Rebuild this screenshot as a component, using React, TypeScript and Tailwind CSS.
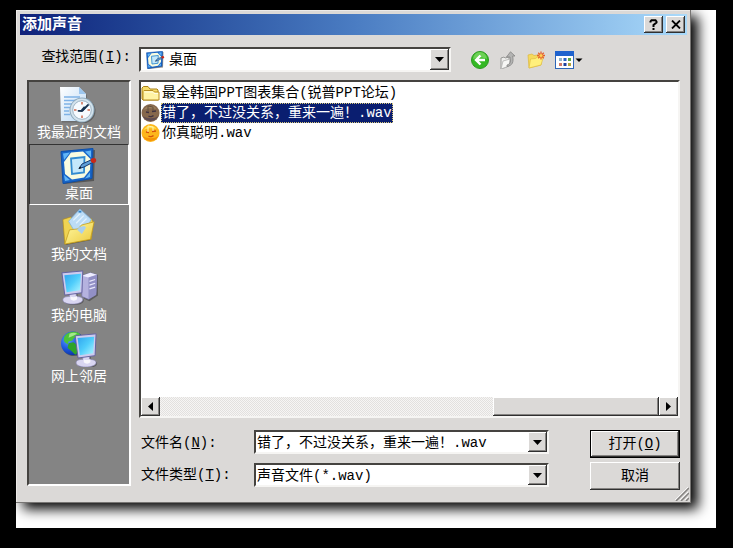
import { useState } from 'react';
import type { ReactNode } from 'react';
import clsx from 'clsx';

const raised =
  'bg-[#dbd9d7] shadow-[inset_-1px_-1px_#303030,inset_1px_1px_#ffffff,inset_-2px_-2px_#858381]';
const sunken =
  'bg-white border-2 border-t-[#454340] border-l-[#454340] border-r-[#f6f5f3] border-b-[#f6f5f3]';

function RecentIcon() {
  return (
    <svg viewBox="0 0 38 36" className="h-9 w-[38px] shrink-0" aria-hidden="true">
      <defs>
        <linearGradient id="page" x1="0" y1="0" x2="1" y2="1">
          <stop offset="0" stopColor="#ffffff" />
          <stop offset="1" stopColor="#b9d8f5" />
        </linearGradient>
      </defs>
      <path d="M1 34.500V1h19l6 6v27.500z" fill="#555" opacity=".5" transform="translate(1 1)" />
      <path d="M0 0h19l7 7v27H1z" fill="url(#page)" />
      <path d="M19 0v7h7z" fill="#9cc6ee" />
      <path d="M4 10h16M4 13.500h16M4 17h10M4 20.500h6M4 24h5M4 27.500h6" stroke="#7fb2e6" strokeWidth="1.300" />
      <circle cx="23.500" cy="24" r="12" fill="#444" opacity=".55" />
      <circle cx="22" cy="23" r="12.500" fill="#8faabd" />
      <circle cx="22" cy="23" r="11.500" fill="#d3e3ed" />
      <circle cx="22" cy="23" r="9.300" fill="#f6fbff" stroke="#8ba5b8" strokeWidth=".8" />
      <path d="M22 15v2.500M22 28.500V31M14 23h2.500M27.500 23H30" stroke="#cf6a4d" strokeWidth="1.500" />
      <path d="M28 18l-6 6-3.500-.2" fill="none" stroke="#16324f" strokeWidth="1.800" strokeLinecap="round" />
      <path d="M25 20l-3 3.500" stroke="#16324f" strokeWidth="2.600" />
    </svg>
  );
}

function DesktopIcon({ className }: { className: string }) {
  return (
    <svg viewBox="0 0 38 36" className={className} aria-hidden="true">
      <path d="M3 5l32-3-1 31-30 3z" fill="#333" opacity=".55" />
      <path d="M1 3.500L33 .5l-1 30L3 35.500z" fill="#1765c8" stroke="#0e4fa8" />
      <path d="M3 5.500l7-1L4 12zM31 2.500l-6 1 6 6zM30 29l-5 1.500 5-6zM5 33l5-1-6-5z" fill="#62b6f7" />
      <path d="M11 4.500l12-1 7.500 7.500-.5 11-6 7.500-12 2L5 26l-1-12z" fill="#f8fbe0" />
      <path d="M11 10.500l13.500-1.500-.5 15.500-12 1.500z" fill="#c4e8fb" stroke="#328bd0" strokeWidth="1.800" />
      <path d="M19 20.500l3-4.500 10-4.500 1.500 2.500-9.500 5z" fill="#5e9fd8" stroke="#183b70" strokeWidth="1" />
      <path d="M18.500 21l3-1-1.500-1.500z" fill="#111" />
      <ellipse cx="33.500" cy="12.500" rx="2.700" ry="2.400" fill="#c92818" />
    </svg>
  );
}

function DocumentsIcon() {
  return (
    <svg viewBox="0 0 38 38" className="h-9 w-[38px] shrink-0" aria-hidden="true">
      <defs>
        <linearGradient id="docFolder" x1="0" y1="0" x2="1" y2="1">
          <stop offset="0" stopColor="#fffaa6" />
          <stop offset="1" stopColor="#ecc93c" />
        </linearGradient>
      </defs>
      <path d="M5 38l-1-16 31-8-4 19z" fill="#333" opacity=".5" />
      <path d="M2 11l8-2.500 3 2.500 19-1 2 4-2 18L4 37z" fill="#efd352" stroke="#b18b17" strokeWidth=".7" />
      <path d="M8 13L20 0l12 11-9 16-9-4z" fill="#bcdcf6" stroke="#7fb2de" strokeWidth=".8" />
      <path d="M13 12l7-7M16 15l8-8M20 17l7-7" stroke="#e3f2fe" strokeWidth="1.300" />
      <path d="M18.500 1.800h3v2h-3z" fill="#3384c8" />
      <path d="M4 37l5-15 9-1 3.500-4L35 13.500 31 32z" fill="url(#docFolder)" stroke="#c39c1c" strokeWidth=".8" />
      <path d="M17 22l5 4.500 4.500-7-2-1.500-5 1z" fill="#a9cfee" />
    </svg>
  );
}

function Screen() {
  return (
    <g>
      <path d="M10 24l7-1 1 6 6 2c1 4-4 6-10 6-7 0-11-2-10-5 1-2 3-3 6-3z" fill="#333" opacity=".5" />
      <path d="M9 23l7-1v6c4 0 7 1 7 3.500S18 36 12 36s-10-1.800-10-4.500S5 28 9 28z" fill="#d9d6f1" stroke="#8f8cba" strokeWidth=".7" />
      <path d="M10 28c3 1 5 1 7-1v4c-2 2-5 2-7 0z" fill="#fff" opacity=".8" />
      <path d="M1 3l22-2-1 23-18 2.500z" fill="#cccbee" stroke="#6260a0" strokeWidth="1" />
      <path d="M3.500 5.500L21 4l-1 17.500L6 23.500z" fill="url(#glass)" />
    </g>
  );
}

function GlassGradient() {
  return (
    <defs>
      <linearGradient id="glass" x1="0" y1="0" x2="1" y2="1">
        <stop offset="0" stopColor="#2fa4ee" />
        <stop offset=".5" stopColor="#4fcdfb" />
        <stop offset="1" stopColor="#b0f6ff" />
      </linearGradient>
    </defs>
  );
}

function ComputerIcon() {
  return (
    <svg viewBox="0 0 38 38" className="h-9 w-[38px] shrink-0" aria-hidden="true">
      <GlassGradient />
      <path d="M24 7l15-2v22l-9 6-6-3z" fill="#333" opacity=".5" />
      <path d="M22 6l9-3 7 2-1 21-8 5-7-3z" fill="#b5b2df" stroke="#6f6da5" strokeWidth=".7" />
      <path d="M22 6l9-3 7 2-9 3z" fill="#eeedff" />
      <path d="M29 8l9-3-1 21-8 5z" fill="#9290c6" />
      <path d="M30 12l6-2M30 16l6-2M30 20l6-2" stroke="#e8e7fb" strokeWidth="1.300" />
      <Screen />
    </svg>
  );
}

function NetworkIcon() {
  return (
    <svg viewBox="0 0 38 38" className="h-9 w-[38px] shrink-0" aria-hidden="true">
      <defs>
        <radialGradient id="globe" cx=".3" cy=".35" r=".8">
          <stop offset="0" stopColor="#5b9dff" />
          <stop offset=".5" stopColor="#1b55dc" />
          <stop offset="1" stopColor="#08268c" />
        </radialGradient>
      </defs>
      <GlassGradient />
      <circle cx="13.500" cy="14" r="12.500" fill="#333" opacity=".5" />
      <circle cx="12.500" cy="13" r="12.500" fill="url(#globe)" />
      <path d="M5 4C8 .8 14-.5 19 2l2 3-4 3-3-1-2 3-4 1-1 3-3-2C2 9 3 6 5 4z" fill="#4cc23a" />
      <path d="M8 13l5-1 6 4v6l-4 3-4-4-4-3z" fill="#2ea32a" />
      <path d="M9 3c3-1.500 6-1.500 8 0l-4 2-5 2z" fill="#a3e88a" />
      <g transform="translate(14 2)">
        <Screen />
      </g>
    </svg>
  );
}

function FolderIcon() {
  return (
    <svg viewBox="0 0 20 20" className="h-5 w-5 shrink-0" aria-hidden="true">
      <path d="M1 16V5l1.500-1.500H7L9 6h7l1 1v10H2z" fill="#f6dc6a" stroke="#a98118" />
      <path d="M2 17V8.500L3 7.500h9L13.500 9H18v8z" fill="#fff3a4" stroke="#b88d20" />
      <path d="M3.500 9h8L13 10.500h4" stroke="#fffde2" fill="none" />
    </svg>
  );
}

function SoundIcon({ selected }: { selected: boolean }) {
  return (
    <svg viewBox="0 0 20 20" className="h-5 w-5 shrink-0" aria-hidden="true">
      <circle cx="9.500" cy="10" r="9" fill={selected ? '#86674c' : '#fdb61c'} />
      <path d="M1.500 13a9 9 0 0 0 16 0c-4 3-11 3-16 0z" fill={selected ? '#5f4c52' : '#f49308'} />
      <path d="M2.500 7c3-5 10-6 13-1-4-1-9-1-13 1z" fill={selected ? '#9c805c' : '#ffe052'} />
      <path
        d="M5 9l3 .5M11 8.500l4-.5M7.500 13c1.500 1 4 .5 5-.5"
        stroke={selected ? '#3f3140' : '#d5520c'}
        strokeWidth="1.500"
        fill="none"
      />
      <path d="M7 3v6M7 3l5 1v4" stroke={selected ? '#63503f' : '#fff3ae'} fill="none" />
    </svg>
  );
}

const places = [
  { id: 'recent', label: '我最近的文档', icon: <RecentIcon /> },
  { id: 'desktop', label: '桌面', icon: <DesktopIcon className="h-9 w-[38px] shrink-0" /> },
  { id: 'documents', label: '我的文档', icon: <DocumentsIcon /> },
  { id: 'computer', label: '我的电脑', icon: <ComputerIcon /> },
  { id: 'network', label: '网上邻居', icon: <NetworkIcon /> },
];

const files = [
  { name: '最全韩国PPT图表集合(锐普PPT论坛)', folder: true },
  { name: '错了，不过没关系，重来一遍！.wav', folder: false },
  { name: '你真聪明.wav', folder: false },
];

const toolButtons = [
  {
    label: '后退',
    icon: (
      <svg viewBox="0 0 18 18" className="h-[18px] w-[18px]" aria-hidden="true">
        <circle cx="9" cy="9" r="8.500" fill="#35b824" stroke="#2b9a20" />
        <path d="M2 8a7 7 0 0 1 14 0c-4-2-9-2-14 0z" fill="#86dc6b" opacity=".7" />
        <path d="M9.500 4.500L5 9l4.500 4.500M5.500 9H14" stroke="#fff" strokeWidth="2.400" fill="none" />
      </svg>
    ),
  },
  {
    label: '向上一级',
    icon: (
      <svg viewBox="0 0 18 18" className="h-[18px] w-[18px]" aria-hidden="true">
        <path d="M2 7l3-1 1 1 4-1v9l-8 3z" fill="#ececea" stroke="#9a9a98" />
        <path d="M4 10l7-2-1 7-8 3z" fill="#f7f7f5" stroke="#b0b0ae" strokeWidth=".8" />
        <path d="M8 14c4-1 4-4 3-8H7.500L11.500.8 16 5h-2.300c1 6 0 9.500-5.700 10.500z" fill="#b4b4b3" stroke="#858584" strokeWidth=".8" />
      </svg>
    ),
  },
  {
    label: '新建文件夹',
    icon: (
      <svg viewBox="0 0 18 18" className="h-[18px] w-[18px]" aria-hidden="true">
        <path d="M1 4l4-1 2 1.500 7-1V14L2 17z" fill="#f6da5c" stroke="#dbb840" strokeWidth=".7" />
        <path d="M2 17L3.500 8l5-.5 2-1.500 6-.5L14 14z" fill="#fff07c" stroke="#dfbd43" strokeWidth=".7" />
        <path d="M14 .5v8M10 4.500h8M11.200 1.700l5.600 5.600M16.800 1.700l-5.600 5.600" stroke="#e5602c" strokeWidth="1.300" />
        <circle cx="14" cy="4.500" r="1.600" fill="#ffd257" />
      </svg>
    ),
  },
  {
    label: '查看',
    icon: (
      <svg viewBox="0 0 28 18" className="h-[18px] w-7" aria-hidden="true">
        <rect x=".5" y=".5" width="18" height="17" fill="#fff" stroke="#2d66b8" />
        <path d="M0 0h19v5H0z" fill="#1e62cd" />
        <path d="M4 7h3v3H4z" fill="#8fb4c9" />
        <path d="M8.500 7h3v3h-3z" fill="#2b63c4" />
        <path d="M13 7h3v3h-3z" fill="#58a548" />
        <path d="M4 12h3v3H4z" fill="#cf7a69" />
        <path d="M8.500 12h3v3h-3z" fill="#1f3f9c" />
        <path d="M13 12h3v3h-3z" fill="#b2a13e" />
        <path d="M20.500 7.500h7L24 11z" fill="#000" />
      </svg>
    ),
  },
];

function DropArrow() {
  return (
    <svg viewBox="0 0 9 5" className="h-[5px] w-[9px]" aria-hidden="true">
      <path d="M0 0h9L4.500 5z" fill="#000" />
    </svg>
  );
}

function ComboBox({ children, className }: { children: ReactNode; className?: string }) {
  return (
    <div className={clsx('flex min-w-0 flex-1', sunken, className)}>
      {children}
      <span className={clsx('pointer-events-none flex w-[19px] shrink-0 items-center justify-center', raised)}>
        <DropArrow />
      </span>
    </div>
  );
}

function ScrollBar() {
  return (
    <div className="flex h-[19px] bg-[repeating-conic-gradient(#f6f5f4_0_25%,#e2e0de_0_50%)] bg-[length:2px_2px]">
      <button aria-label="向左滚动" className={clsx('flex w-[19px] items-center justify-center', raised)}>
        <svg viewBox="0 0 5 9" className="h-[9px] w-[5px]" aria-hidden="true">
          <path d="M5 0v9L0 4.500z" />
        </svg>
      </button>
      <div className="flex flex-1 justify-end">
        <div className={clsx('w-1/3', raised)} />
      </div>
      <button aria-label="向右滚动" className={clsx('flex w-[19px] items-center justify-center', raised)}>
        <svg viewBox="0 0 5 9" className="h-[9px] w-[5px]" aria-hidden="true">
          <path d="M0 0v9l5-4.500z" />
        </svg>
      </button>
    </div>
  );
}

export default function App() {
  const [place, setPlace] = useState('desktop');
  const [fileName, setFileName] = useState(files[1].name);

  return (
    <div className="flex min-h-screen bg-black pt-2.5 pr-[17px] pb-5 pl-4 font-['Liberation_Mono','Noto_Sans_CJK_SC',monospace] text-sm leading-5 text-black">
      <div className="flex flex-1 overflow-hidden bg-white pr-[25px] pb-[25px]">
        <div className="relative flex flex-1 flex-col bg-[#dbd9d7] shadow-[inset_-1px_-1px_#777573,inset_1px_1px_#eceae8,7px_6px_12px_#000000]">
          {/* Title bar */}
          <div className="mx-1 mt-1 flex h-[21px] items-center gap-[3px] bg-gradient-to-r from-[#10217a] via-[#4a7cc2] to-[#aadafa] px-0.5">
            <h1 className="flex-1 pt-0.5 text-[15px] font-bold text-white">添加声音</h1>
            <button aria-label="帮助" className={clsx('flex h-[17px] w-[19px] items-center justify-center', raised)}>
              <svg viewBox="0 0 9 11" className="h-[11px] w-[9px]" fill="none" stroke="#000" strokeWidth="2" aria-hidden="true">
                <path d="M1.500 3.500V2.500L2.500 1.200h4L7.500 2.500v1L4.500 6v2M4.500 9v2" />
              </svg>
            </button>
            <button aria-label="关闭" className={clsx('flex h-[17px] w-[19px] items-center justify-center', raised)}>
              <svg viewBox="0 0 10 9" className="h-[9px] w-[10px]" stroke="#000" strokeWidth="1.800" aria-hidden="true">
                <path d="M1 .5l8 8M9 .5l-8 8" />
              </svg>
            </button>
          </div>

          <div className="flex flex-1 flex-col gap-2 px-[11px] pt-3 pb-[13px]">
            {/* Look in */}
            <div className="flex gap-2">
              <label htmlFor="look-in" className="w-[104px] text-right">
                查找范围(<u>I</u>):
              </label>
              <div className="flex flex-1">
                <ComboBox className="h-[25px]">
                  <span className="flex w-7 shrink-0 items-center justify-center">
                    <DesktopIcon className="h-[18px] w-[19px]" />
                  </span>
                  <select id="look-in" className="min-w-0 flex-1 appearance-none bg-transparent outline-none">
                    <option>桌面</option>
                  </select>
                </ComboBox>
                <div className="flex w-[229px] items-center gap-2.5 pl-5">
                  {toolButtons.map((tool) => (
                    <button key={tool.label} aria-label={tool.label}>
                      {tool.icon}
                    </button>
                  ))}
                </div>
              </div>
            </div>

            <div className="flex flex-1 gap-2">
              {/* Places bar */}
              <nav className="mb-1 w-[104px] border-2 border-t-[#454340] border-r-white border-b-white border-l-[#454340] bg-[#848484] pt-px">
                {places.map((item) => (
                  <button
                    key={item.id}
                    onClick={() => setPlace(item.id)}
                    className={clsx(
                      'flex h-[61px] w-full flex-col items-center border pt-[3px] text-white',
                      place === item.id
                        ? 'border-t-[#333333] border-r-white border-b-white border-l-[#333333]'
                        : 'border-transparent'
                    )}
                  >
                    {item.icon}
                    <span>{item.label}</span>
                  </button>
                ))}
              </nav>

              <div className="flex min-w-0 flex-1 flex-col gap-3">
                {/* File list */}
                <div className={clsx('flex flex-1 flex-col', sunken)}>
                  <ul className="flex-1 pt-px">
                    {files.map((file) => {
                      const selected = file.name === fileName;
                      return (
                        <li key={file.name}>
                          <button onClick={() => setFileName(file.name)} className="flex h-5 items-center">
                            {file.folder ? <FolderIcon /> : <SoundIcon selected={selected} />}
                            <span
                              className={clsx(
                                'flex h-5 items-center border border-dotted whitespace-nowrap',
                                selected ? 'border-[#d8c878] bg-[#0a1e70] text-white' : 'border-transparent'
                              )}
                            >
                              {file.name}
                            </span>
                          </button>
                        </li>
                      );
                    })}
                  </ul>
                  <ScrollBar />
                </div>

                {/* File name and type */}
                <div className="flex gap-[41px]">
                  <div className="flex flex-1 flex-col gap-[9px]">
                    <div className="flex h-6 items-center">
                      <label htmlFor="file-name" className="w-[115px] pt-0.5 pl-0.5">
                        文件名(<u>N</u>):
                      </label>
                      <ComboBox className="h-6">
                        <input
                          id="file-name"
                          value={fileName}
                          onChange={(e) => setFileName(e.target.value)}
                          className="min-w-0 flex-1 bg-transparent px-px pt-px outline-none"
                        />
                      </ComboBox>
                    </div>
                    <div className="flex h-6 items-center">
                      <label htmlFor="file-type" className="w-[115px] pl-0.5">
                        文件类型(<u>T</u>):
                      </label>
                      <ComboBox className="h-6">
                        <select id="file-type" className="min-w-0 flex-1 appearance-none bg-transparent px-px pt-px outline-none">
                          <option>声音文件(*.wav)</option>
                        </select>
                      </ComboBox>
                    </div>
                  </div>
                  <div className="flex w-[90px] flex-col gap-1">
                    <button className={clsx('h-7 border border-black', raised)}>
                      打开(<u>O</u>)
                    </button>
                    <button className={clsx('h-7', raised)}>取消</button>
                  </div>
                </div>
              </div>
            </div>
          </div>

          {/* Resize grip */}
          <svg viewBox="0 0 14 14" className="absolute right-0.5 bottom-0.5 h-3.5 w-3.5" aria-hidden="true">
            <path d="M1 14L14 1M6 14l8-8M11 14l3-3" stroke="#858381" strokeWidth="1.500" />
            <path d="M0 13L13 0M5 13l8-8M10 13l3-3" stroke="#ffffff" strokeWidth=".8" />
          </svg>
        </div>
      </div>
    </div>
  );
}
